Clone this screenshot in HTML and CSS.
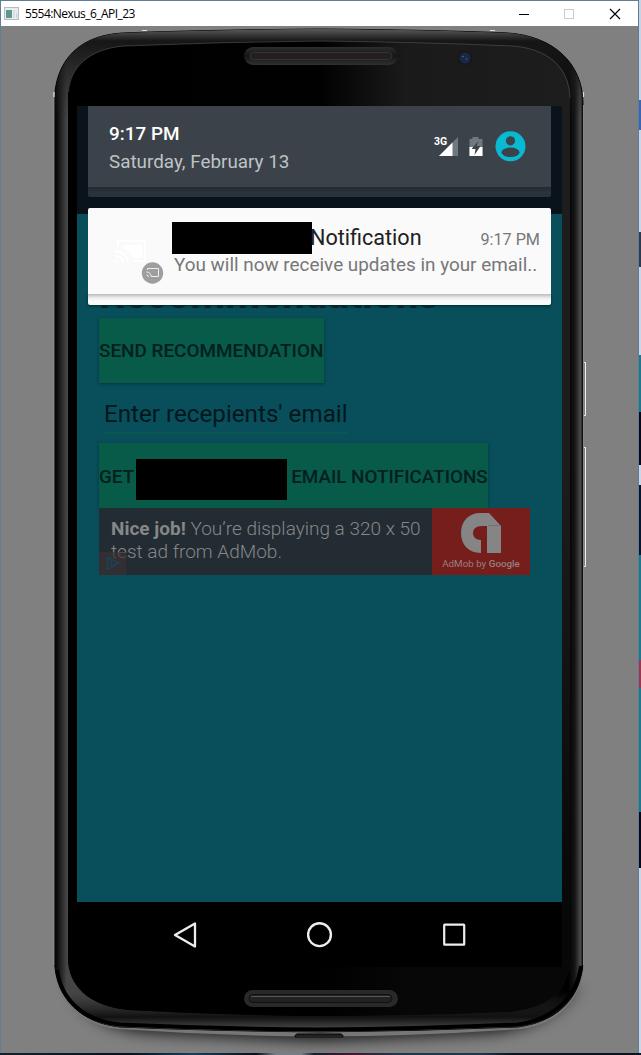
FILE: index.html
```html
<!DOCTYPE html>
<html lang="en">
<head>
<meta charset="utf-8">
<title>5554:Nexus_6_API_23</title>
<link rel="stylesheet" href="styles.css">
</head>
<body>
<div class="window">
  <header class="titlebar">
    <svg class="app-icon" width="16" height="14" viewBox="0 0 16 14"><rect x=".5" y=".5" width="14" height="12" fill="#e8edf0" stroke="#b4bcc1"/><rect x="2" y="3" width="6" height="8" fill="#5f9690"/><path d="M10 3v8M12.500 6v5" stroke="#cbd3d8"/></svg>
    <span class="window-title">5554:Nexus_6_API_23</span>
    <svg class="window-buttons" width="106" height="12" viewBox="0 0 106 12"><path d="M0 6.500h10" stroke="#000"/><rect x="45.500" y="1.500" width="9" height="9" fill="none" stroke="#ccc"/><path d="M91 1l10 10M101 1L91 11" stroke="#000" stroke-width="1.200"/></svg>
  </header>
  <main class="stage">
    <svg class="device" width="637" height="1027" viewBox="1 26 637 1027">
      <defs>
        <linearGradient id="rimX"><stop offset="0" stop-color="#050505"/><stop offset=".004" stop-color="#0a0a0a"/><stop offset=".023" stop-color="#454545"/><stop offset=".5" stop-color="#333"/><stop offset=".972" stop-color="#000"/><stop offset=".985" stop-color="#171717"/><stop offset=".995" stop-color="#4b4b4b"/><stop offset="1" stop-color="#111"/></linearGradient>
        <linearGradient id="rimY" x2="0" y2="1"><stop offset="0" stop-color="#5a5a5a"/><stop offset=".012" stop-color="#161616"/><stop offset=".09" stop-color="#222" stop-opacity="0"/><stop offset=".96" stop-color="#333" stop-opacity="0"/><stop offset=".985" stop-color="#111"/><stop offset="1" stop-color="#555"/></linearGradient>
        <linearGradient id="glass"><stop offset="0" stop-color="#000"/><stop offset=".5" stop-color="#020101"/><stop offset=".67" stop-color="#1a1a1a"/><stop offset="1" stop-color="#1d1d1d"/></linearGradient>
        <linearGradient id="glassFade" x2="0" y2="1"><stop offset="0" stop-color="#000" stop-opacity="0"/><stop offset=".4" stop-color="#000" stop-opacity="0"/><stop offset=".9" stop-color="#000" stop-opacity=".75"/></linearGradient>
        <linearGradient id="slot" x2="0" y2="1"><stop offset="0" stop-color="#2e2e2e"/><stop offset=".5" stop-color="#151515"/><stop offset="1" stop-color="#303030"/></linearGradient>
        <filter id="soft" x="-15%" y="-100%" width="130%" height="300%"><feGaussianBlur stdDeviation="10 7"/></filter>
      </defs>
      <path d="M75 980C85 1018 105 1030 150 1034L320 1042L490 1034C535 1030 565 1010 574 985Z" fill="#000" opacity=".75" filter="url(#soft)"/>
      <path d="M54 965C57 1003 80 1025 118 1029Q220 1036 320 1036.500Q420 1036 520 1029C558 1025 581 1000 584 965Z" fill="#777"/>
      <path d="M54.500 100C55 68 72 36 122 33Q200 30 320 29Q440 30 508 33C552 36 583 62 583 104V962C581 1000 555 1022 518 1027Q420 1031 320 1032Q215 1031 120 1027C82 1023 57 1000 54.500 962Z" fill="url(#rimX)" stroke="#000"/>
      <path d="M55 100C55.500 68 72 36 122 33Q200 30 320 29Q440 30 508 33C552 36 583 62 583 104V962C581 1000 555 1022 518 1027Q420 1031 320 1032Q215 1031 120 1027C82 1023 57 1000 55 962Z" fill="url(#rimY)"/>
      <path d="M57 970C61 1000 84 1021 120 1024.500Q220 1029 320 1029.500Q420 1029 518 1024.500C552 1020 577 998 581 966" fill="none" stroke="#000" stroke-width="4"/>
      <path d="M68 92C70 68 88 49 124 46Q220 42 320 41Q420 42 513 46C548 49 570 67 570 98V960C568 990 550 1008 510 1012Q415 1016 320 1016Q220 1015 128 1010C88 1006 68 985 68 958Z" fill="url(#glass)"/>
      <path d="M68 92V958C68 985 88 1006 128 1010Q220 1015 320 1016Q415 1016 510 1012C550 1008 568 990 570 960V92Z" fill="url(#glassFade)"/>
      <path d="M68.500 92C70 68 88 49 124 46Q220 42 320 41Q420 42 513 46C548 49 569 67 570 98" fill="none" stroke="#555" stroke-width=".6"/>
      <path d="M54 92V965M583.500 105V965" stroke="#999" stroke-width=".8"/>
      <path d="M142 30.500h5M490 30.500h5M54 92v5M583.500 92v5" stroke="#ddd" stroke-width="1.200"/>
      <path d="M295 1038v-2.500l2-1.500h44l2 1.500v2.500z" fill="#222"/><path d="M295 1037v-1.500l2-1.500h44l2 1.500v1.500" fill="none" stroke="#000"/>
      <path d="M584 362.500h1.500v53h-1.500M584 447.500h1.500v119h-1.500" fill="none" stroke="#eee"/>
      <rect x="244" y="47" width="154" height="18" rx="9" fill="url(#slot)"/><rect x="250" y="52.500" width="142" height="7" rx="3.500" fill="#231f20" stroke="#353334"/>
      <rect x="244" y="990" width="154" height="17" rx="8.500" fill="#292929"/><rect x="249" y="994.500" width="143" height="8" rx="4" fill="#222" stroke="#111"/><path d="M251 996.500h139" stroke="#565656"/>
      <circle cx="465" cy="58" r="7.500" fill="#181819"/><circle cx="465" cy="58" r="5.500" fill="#1b2747"/><circle cx="463" cy="56.500" r=".8" fill="#526bab"/><circle cx="466.500" cy="59" r="1" fill="#344a83"/>
    </svg>
    <section class="screen">
      <div class="statusbar"></div>
      <div class="app">
        <h1 class="heading">Recommendations</h1>
        <div class="button send"><span>SEND RECOMMENDATION</span></div>
        <div class="input">Enter recepients' email</div>
        <div class="button get"><span>GET</span><i class="redacted button-mask"></i><span>EMAIL NOTIFICATIONS</span></div>
        <div class="ad">
          <div class="ad-copy"><b>Nice job!</b> You’re displaying a 320 x 50<br>test ad from AdMob.
            <svg class="ad-choice" width="27" height="23" viewBox="0 0 27 23"><path d="M0 0h27v23H0z" fill="#3b3032"/><path d="M8.500 5v12l3-1M8.500 5l11 6-7 4V8" fill="none" stroke="#174c69" stroke-width="1.600"/></svg>
          </div>
          <div class="ad-logo">
            <svg width="42" height="42" viewBox="0 0 42 42"><path d="M20 1H29L41 14V41H27V14H22C16 14 13 17 13 21C13 25 16 28 21 28V41C8 41 1 32 1 21C1 9 9 1 20 1Z" fill="#858585"/><path d="M28 13.500h13" stroke="#6c6c6c" stroke-width=".8"/></svg>
            <span>AdMob by <b>Google</b></span>
          </div>
        </div>
      </div>
      <nav class="navbar">
        <svg width="24" height="26" viewBox="0 0 24 26"><path d="M22 1.500V24.500L2 13Z" fill="none" stroke="#eee" stroke-width="2.300" stroke-linejoin="round"/></svg>
        <svg width="26" height="26" viewBox="0 0 26 26"><circle cx="12.500" cy="12.700" r="11.400" fill="none" stroke="#eee" stroke-width="2.400"/></svg>
        <svg width="24" height="24" viewBox="0 0 24 24"><rect x="2.200" y="1.700" width="20" height="20" rx=".5" fill="none" stroke="#eee" stroke-width="2.200"/></svg>
      </nav>
      <div class="shade">
        <div class="quick">
          <div class="clock"><b>9:17 PM</b><span>Saturday, February 13</span></div>
          <svg class="status-icons" width="94" height="34" viewBox="0 0 94 34"><text x="0" y="16" class="network">3G</text><path d="M5 27L24 8V27Z" fill="#707980"/><path d="M5 27L18.500 13.500V27Z" fill="#fff"/><path d="M38.500 8h6v2h4v17h-13V10h3z" fill="#707980"/><path d="M35.500 18h13v9h-13z" fill="#fff"/><path d="M44.500 12l-7 8h4l-1 6 6-9h-4l2-5z" fill="#3b4249"/><circle cx="76.500" cy="17.300" r="15" fill="#09b9d1"/><circle cx="76.500" cy="11.800" r="4.600" fill="#3b4249"/><ellipse cx="76.500" cy="23.300" rx="9" ry="4.800" fill="#3b4249"/></svg>
        </div>
        <div class="quick-under"></div>
        <article class="notice">
          <svg class="cast" width="53" height="46" viewBox="0 0 53 46"><path d="M3 7V2H30V22H18M0 12Q12 13 13 24M0 17Q7 17 8 24M0 22q3 0 3 2" fill="none" stroke="#fff" stroke-width="2"/><path d="M8 6h19v13H17Q14 11 8 10Z" fill="#fff"/><circle cx="37.500" cy="34" r="10.700" fill="#9e9e9e"/><path d="M32.500 31v-1.500h11v8h-6.500M31.500 33q4 0 5 5M31.500 36q2 0 2 2" fill="none" stroke="#eee" stroke-width="1"/></svg>
          <div class="notice-body">
            <div class="notice-line"><i class="redacted name-mask"></i><span class="notice-name">Notification</span><time>9:17 PM</time></div>
            <div class="message">You will now receive updates in your email..</div>
          </div>
        </article>
        <div class="notice-under"></div>
      </div>
    </section>
  </main>
</div>
<aside class="desktop-edge"></aside>
<footer class="desktop-bottom"></footer>
</body>
</html>
```

FILE: styles.css
```css
* { box-sizing: border-box; }
body { margin: 0; width: 641px; height: 1055px; display: grid; grid-template: 1053px 2px / 639px 2px; overflow: hidden; background: #111; font-family: Roboto, sans-serif; }
.window { border: 1px solid #607d94; border-bottom: 0; }
.titlebar { height: 25px; background: #fff; display: flex; align-items: center; padding-left: 3px; font: 12px "Open Sans", "Noto Sans", sans-serif; color: #000; }
.window-title { margin: 0 0 0 5px; letter-spacing: -.55px; white-space: nowrap; }
.window-buttons { margin-left: auto; margin-right: 13px; }
.stage { position: relative; height: 1027px; background: #808080; padding: 80px 0 0 76px; }
.device { position: absolute; left: 0; top: 0; }
.screen { position: relative; width: 485px; height: 861px; background: #084f5b; overflow: hidden; }
.statusbar { height: 108px; background: #0a121c; }
.app { height: 688px; padding: 60px 0 0 22px; }
.heading { margin: 0; height: 44px; font-size: 40.300px; line-height: 42px; color: #04262c; white-space: nowrap; }
.button { height: 65px; display: flex; align-items: center; background: #085a49; color: #03201f; font-size: 18.900px; font-weight: 500; white-space: nowrap; box-shadow: 0 1px 3px #06323e; }
.send { width: 225px; }
.input { width: 243px; height: 51px; margin: 0 0 9px 5px; border-bottom: 2px solid #085a50; font-size: 24.200px; line-height: 62px; color: #02171b; white-space: nowrap; }
.get { width: 389px; }
.get span { padding-top: 2px; letter-spacing: -.03px; }
.redacted { display: block; background: #000; }
.button-mask { width: 151px; height: 41px; margin: 7px 4px 0 2px; }
.ad { display: flex; width: 431px; height: 67px; position: relative; }
.ad-copy { position: relative; width: 333px; padding: 10px 0 0 12px; background: #232c32; color: #858789; font-size: 19px; font-weight: 300; line-height: 22.500px; white-space: nowrap; }
.ad-copy b { font-weight: 700; }
.ad-choice { position: absolute; left: 0; bottom: 0; opacity: .7; }
.ad-logo { width: 98px; background: #761e1b; display: flex; flex-direction: column; align-items: center; padding-top: 4px; color: #958080; font-size: 9.800px; line-height: 16px; }
.ad-logo span { margin-top: 2px; white-space: nowrap; }
.ad-logo b { font-weight: 500; }
.navbar { height: 65px; background: #000; display: flex; align-items: center; justify-content: space-between; padding: 0 96px; }
.shade { position: absolute; left: 11px; top: 0; width: 463px; }
.quick { height: 81px; background: #3b4249; display: flex; padding: 15px 23px 0 21px; justify-content: space-between; }
.clock { display: flex; flex-direction: column; color: #bfc3c6; font-size: 18.850px; line-height: 30px; height: 56px; white-space: nowrap; }
.clock b { color: #fff; font-weight: 500; font-size: 18.900px; line-height: 26px; }
.status-icons { margin-top: 8px; overflow: visible; }
.network { fill: #fff; font-size: 10.500px; font-weight: 700; }
.quick-under { height: 10px; background: linear-gradient(#232b31, #29333a 5px); border-radius: 0 0 2px 2px; }
.notice { height: 86px; margin-top: 11px; background: #fafafa; border-radius: 2px 2px 0 0; display: flex; padding: 14px 11px 0 84px; position: relative; }
.cast { position: absolute; left: 27px; top: 31px; }
.notice-body { width: 368px; }
.notice-line { display: flex; height: 32px; }
.name-mask { width: 140px; height: 32px; }
.notice-name { font-size: 21.600px; line-height: 31px; color: #202020; margin-left: -2px; }
.notice-line time { margin-left: auto; color: #777; font-size: 16.200px; line-height: 35px; }
.message { padding-left: 2px; color: #777; font-size: 18.900px; line-height: 22px; white-space: nowrap; }
.notice-under { height: 11px; background: linear-gradient(#bbb, #eee 4px, #fafafa 7px); border-radius: 0 0 2px 2px; box-shadow: 0 1px 3px #03272d; }
.desktop-edge { background: linear-gradient(#c4d4e6 0 100px, #3766b5 0 130px, #c9d6e8 0 232px, #2c3b4c 0 267px, #c9d6e8 0 355px, #1b7890 0 412px, #060a18 0 465px, #c9d6e8 0 485px, #07162a 0 555px, #1b7890 0 660px, #9c3550 0 688px, #1b7890 0 812px, #060a18 0 868px, #c9d6e8 0); }
.desktop-bottom { grid-column: 1 / 3; background: linear-gradient(90deg, #14222c, #07121c 20%, #173f5c 30%, #0b1018 40%, #777f86 43% 47%, #182030 49%, #401a2c 55%, #22364c 62%, #22364c 75%, #0b141e 80%); }
```
